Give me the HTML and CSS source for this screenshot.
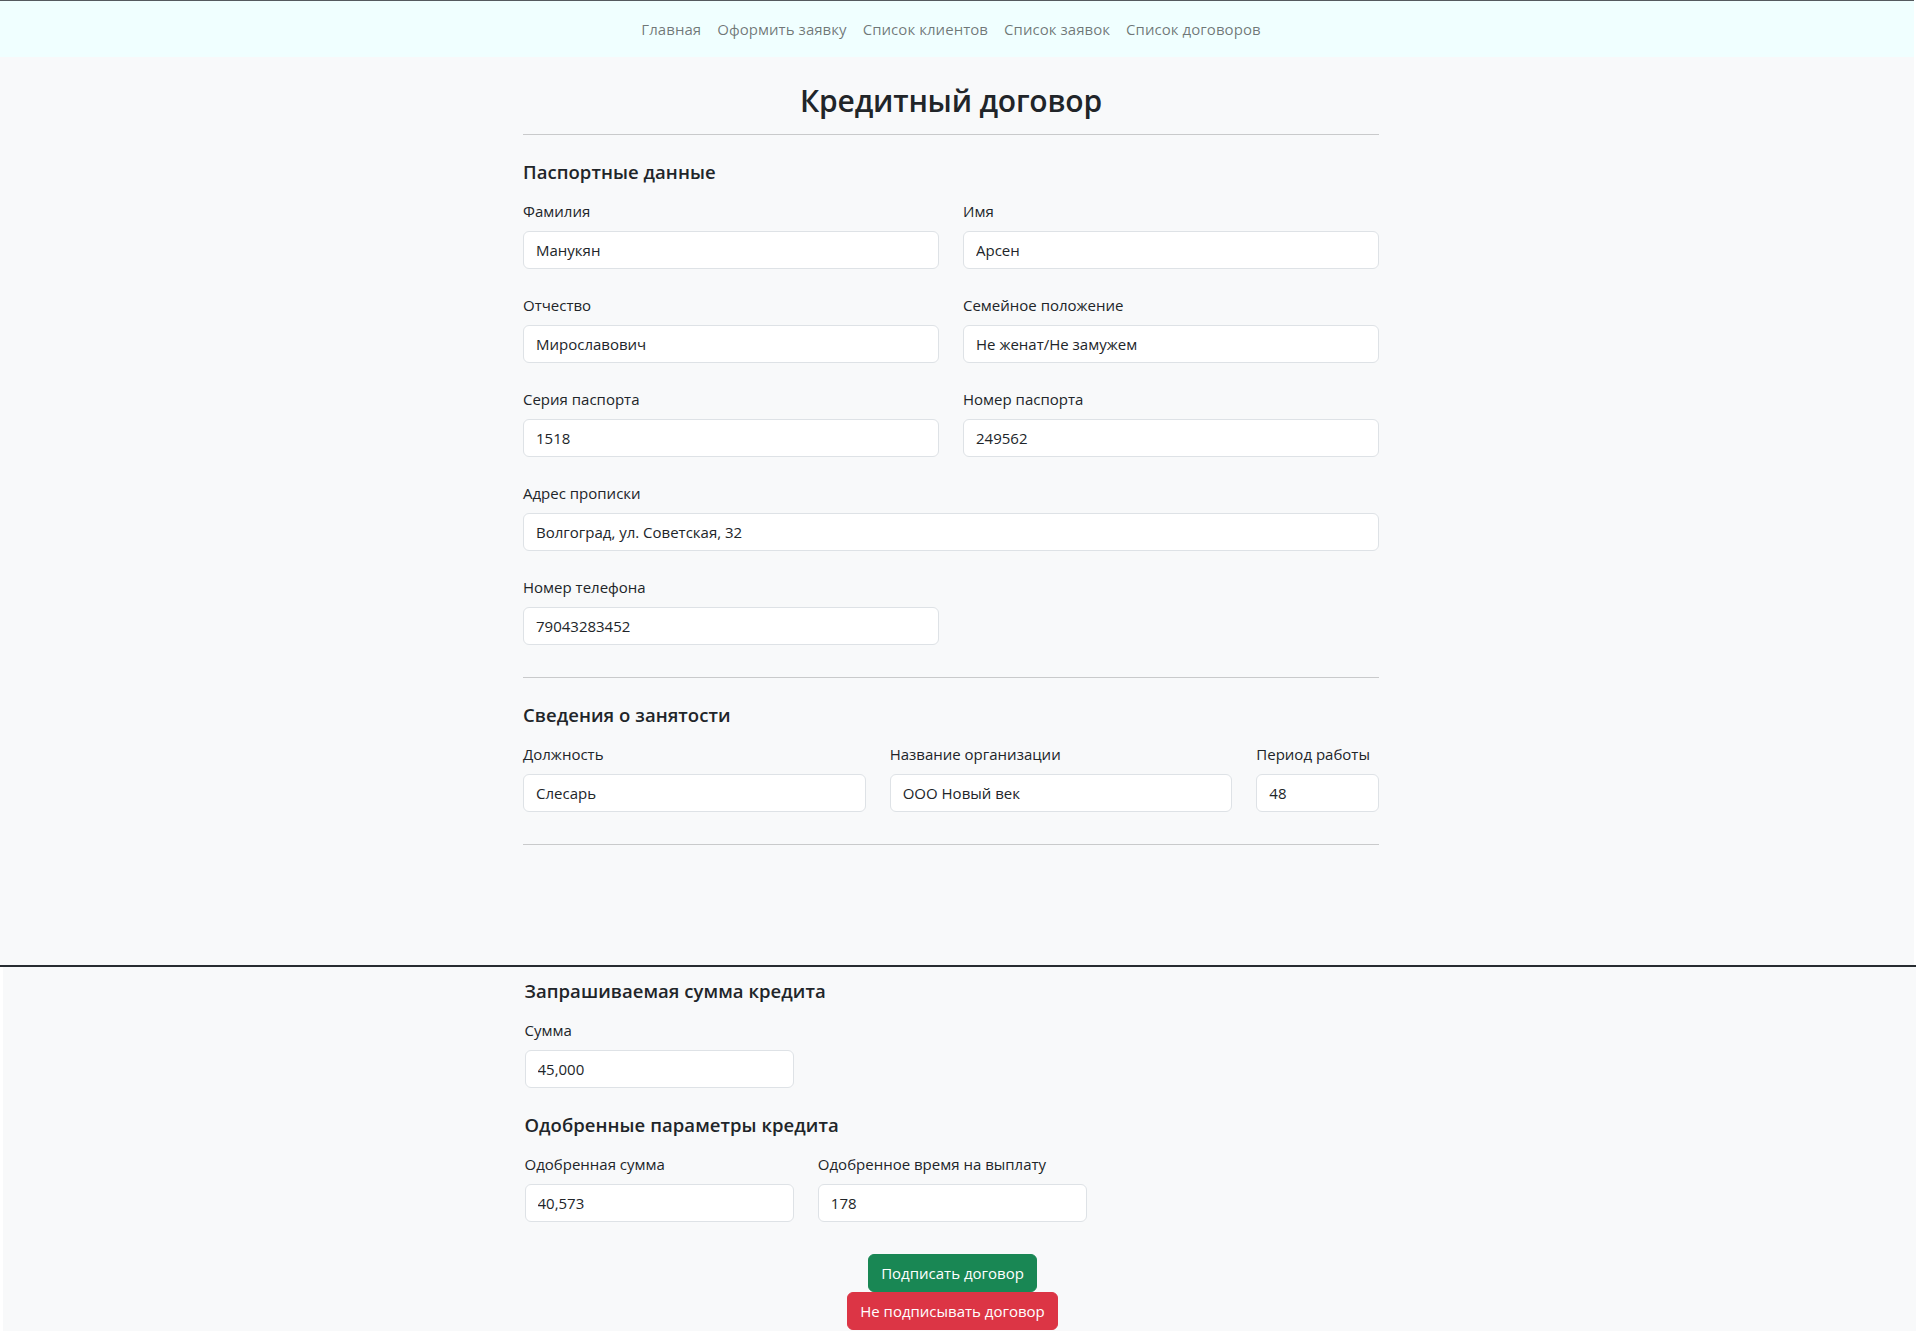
FILE: index.html
```html
<!DOCTYPE html>
<html lang="ru">
<head>
<meta charset="utf-8">
<title>Кредитный договор</title>
<link rel="stylesheet" href="styles.css">
</head>
<body>
<div class="shot shot-top">
  <nav class="navbar">
    <ul class="nav">
      <li><a class="nav-link" href="#">Главная</a></li>
      <li><a class="nav-link" href="#">Оформить заявку</a></li>
      <li><a class="nav-link" href="#">Список клиентов</a></li>
      <li><a class="nav-link" href="#">Список заявок</a></li>
      <li><a class="nav-link" href="#">Список договоров</a></li>
    </ul>
  </nav>
  <main class="container">
    <h2 class="title">Кредитный договор</h2>
    <hr class="rule rule-first">
    <h5 class="section-title">Паспортные данные</h5>
    <div class="row">
      <div class="col col-6"><label class="form-label">Фамилия</label><input class="form-control" value="Манукян"></div>
      <div class="col col-6"><label class="form-label">Имя</label><input class="form-control" value="Арсен"></div>
      <div class="col col-6"><label class="form-label">Отчество</label><input class="form-control" value="Мирославович"></div>
      <div class="col col-6"><label class="form-label">Семейное положение</label><input class="form-control" value="Не женат/Не замужем"></div>
      <div class="col col-6"><label class="form-label">Серия паспорта</label><input class="form-control" value="1518"></div>
      <div class="col col-6"><label class="form-label">Номер паспорта</label><input class="form-control" value="249562"></div>
      <div class="col col-12"><label class="form-label">Адрес прописки</label><input class="form-control" value="Волгоград, ул. Советская, 32"></div>
      <div class="col col-6"><label class="form-label">Номер телефона</label><input class="form-control" value="79043283452"></div>
    </div>
    <hr class="rule">
    <h5 class="section-title">Сведения о занятости</h5>
    <div class="row">
      <div class="col col-5"><label class="form-label">Должность</label><input class="form-control" value="Слесарь"></div>
      <div class="col col-5"><label class="form-label">Название организации</label><input class="form-control" value="ООО Новый век"></div>
      <div class="col col-2"><label class="form-label">Период работы</label><input class="form-control" value="48"></div>
    </div>
    <hr class="rule">
  </main>
</div>
<div class="seam"></div>
<div class="shot shot-bottom">
  <main class="container container-bottom">
    <h5 class="section-title section-title-tight">Запрашиваемая сумма кредита</h5>
    <div class="row">
      <div class="col col-4"><label class="form-label">Сумма</label><input class="form-control" value="45,000"></div>
    </div>
    <h5 class="section-title section-title-mid">Одобренные параметры кредита</h5>
    <div class="row">
      <div class="col col-4"><label class="form-label">Одобренная сумма</label><input class="form-control" value="40,573"></div>
      <div class="col col-4"><label class="form-label">Одобренное время на выплату</label><input class="form-control" value="178"></div>
    </div>
    <div class="actions">
      <button class="btn btn-success" type="button">Подписать договор</button>
      <button class="btn btn-danger" type="button">Не подписывать договор</button>
    </div>
  </main>
</div>
</body>
</html>
```
FILE: styles.css
```css
* { box-sizing: border-box; }

html, body {
  margin: 0;
  padding: 0;
  background: #ffffff;
}

body {
  font-family: "Open Sans", "Noto Sans", sans-serif;
  font-size: 15px;
  line-height: 24px;
  color: #212529;
  width: 1916px;
}

.shot {
  background: #f8f9fa;
  padding-right: 12px;
}

.shot-top {
  width: 1914px;
  height: 965px;
  border-top: 1px solid #555a5f;
}

.navbar {
  background: #f0ffff;
  height: 56px;
  margin-right: -12px;
  padding-right: 12px;
  display: flex;
  align-items: center;
  justify-content: center;
}

.nav {
  list-style: none;
  margin: 0;
  padding: 0;
  display: flex;
}

.nav-link {
  display: block;
  padding: 0 8px;
  color: rgba(0, 0, 0, 0.55);
  text-decoration: none;
  font-size: 15px;
  letter-spacing: 0.05px;
}

.container {
  width: 856px;
  margin: 0 auto;
  padding-top: 25px;
}

.title {
  margin: 0;
  text-align: center;
  font-size: 30px;
  line-height: 38px;
  font-weight: 600;
  letter-spacing: -0.2px;
}

.rule {
  margin: 32px 0 0;
  border: 0;
  border-top: 1px solid #c9cacb;
  height: 0;
}

.rule-first {
  margin-top: 14px;
}

.section-title {
  margin: 25px 0 0;
  font-size: 18.5px;
  line-height: 24px;
  font-weight: 600;
  letter-spacing: 0.05px;
}

.row {
  display: flex;
  flex-wrap: wrap;
  column-gap: 24px;
  row-gap: 24px;
  margin-top: 15px;
}

.col { display: flex; flex-direction: column; }
.col-12 { width: 856px; }
.col-6 { width: 416px; }
.col-5 { width: 342.67px; }
.col-4 { width: 269.33px; }
.col-2 { width: 122.67px; }

.form-label {
  display: block;
  margin-bottom: 8px;
}

.form-control {
  display: block;
  width: 100%;
  height: 38px;
  padding: 6px 12px;
  font-family: inherit;
  font-size: 15px;
  line-height: 24px;
  color: #212529;
  background: #ffffff;
  border: 1px solid #dee2e6;
  border-radius: 6px;
  outline: none;
}

.seam {
  width: 1916px;
  height: 2px;
  background: #272c31;
}

.shot-bottom {
  margin-left: 3px;
  width: 1913px;
  height: 364px;
  padding-right: 14px;
}

.container-bottom {
  padding-top: 12px;
}

.section-title-tight { margin-top: 0; }
.section-title-mid { margin-top: 25px; }

.actions {
  margin-top: 32px;
  display: flex;
  flex-direction: column;
  align-items: center;
}

.btn {
  display: block;
  height: 38px;
  padding: 6px 12px;
  font-family: inherit;
  font-size: 15px;
  line-height: 24px;
  color: #ffffff;
  border: 1px solid transparent;
  border-radius: 6px;
  cursor: pointer;
}

.btn-success { background: #198754; border-color: #198754; }
.btn-danger { background: #dc3545; border-color: #dc3545; }
```
